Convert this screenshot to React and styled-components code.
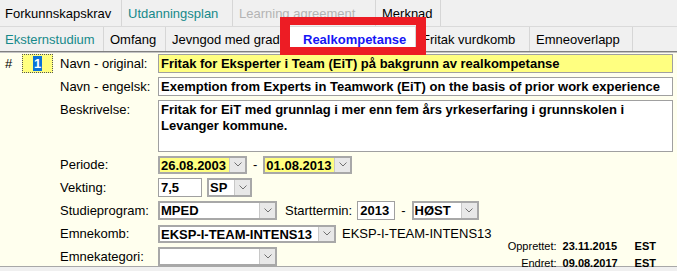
import React from 'react';
import styled, { createGlobalStyle } from 'styled-components';

const GlobalStyle = createGlobalStyle`
  body {
    margin: 0;
    background: #f0f0f0;
    font-family: "Liberation Sans", Arial, sans-serif;
    font-size: 13px;
    color: #000;
  }
`

const Page = styled.div`
  width: 677px;
  height: 271px;
  overflow: hidden;
  background: #f0f0f0;
`

const TabsArea = styled.div`
  position: relative;
  border-bottom: 1px solid #808080;
  box-shadow: 0 1px 0 #c4c4c4;
`

const TabRow = styled.div`
  display: flex;
  height: ${p => p.$h}px;
  border-bottom: ${p => (p.$last ? 'none' : '1px solid #dadada')};
  box-sizing: border-box;
`

const Tab = styled.div`
  width: ${p => p.$w}px;
  box-sizing: border-box;
  display: flex;
  align-items: center;
  padding-left: ${p => (p.$active ? 13 : 6)}px;
  border-right: 1px solid #d6d6d6;
  background: ${p => (p.$active ? '#ffffff' : '#f0f0f0')};
  color: ${p => p.$color || '#000'};
  font-weight: ${p => (p.$active ? 'bold' : 'normal')};
  white-space: nowrap;
  &:first-child {
    padding-left: 5px;
  }
`

const Highlight = styled.div`
  position: absolute;
  left: 280px;
  top: 17px;
  width: 146px;
  height: 38px;
  box-sizing: border-box;
  border-style: solid;
  border-color: #ed1c24;
  border-width: 8px 10px;
  pointer-events: none;
`

const Content = styled.div`
  height: 215px;
  box-sizing: border-box;
  background: #ffffee;
  border-bottom: 1px solid #a8a8a8;
  padding: 2px 4px 0 5px;
  display: flex;
  flex-direction: column;
  gap: 4px;
`

const Row = styled.div`
  display: grid;
  grid-template-columns: 17px 38px 98px 1fr;
  align-items: ${p => (p.$top ? 'start' : 'center')};
  min-height: 19px;
`

const Hash = styled.span``

const NumBox = styled.div`
  width: 31px;
  height: 19px;
  box-sizing: border-box;
  border: 1px dotted #555;
  background: #ffff80;
  display: flex;
  align-items: center;
  justify-content: center;
  font-weight: bold;
  span {
    background: #0a72d8;
    color: #fff;
    padding: 0 1px;
    line-height: 15px;
  }
`

const Label = styled.span`
  grid-column: 3;
  white-space: nowrap;
  padding-top: ${p => (p.$top ? 2 : 0)}px;
`

const Field = styled.div`
  grid-column: 4;
  display: flex;
  align-items: center;
  gap: 5px;
  white-space: nowrap;
`

const TextBox = styled.div`
  width: ${p => (p.$w ? `${p.$w}px` : '100%')};
  height: 19px;
  box-sizing: border-box;
  border: 1px solid #a0a0a0;
  background: ${p => (p.$yellow ? '#ffff80' : '#fff')};
  font-weight: bold;
  padding-left: 2px;
  line-height: 17px;
  overflow: hidden;
`

const TextArea = styled.div`
  height: 52px;
  box-sizing: border-box;
  border: 1px solid #a0a0a0;
  background: #fff;
  font-weight: bold;
  padding: 1px 2px;
  line-height: 16px;
`

const SelectBox = styled.div`
  width: ${p => p.$w}px;
  height: ${p => p.$h || 19}px;
  box-sizing: border-box;
  border: 2px solid #a8a8a8;
  background: ${p => (p.$yellow ? '#ffff80' : '#fff')};
  display: flex;
  align-items: stretch;
`

const SelectValue = styled.span`
  flex: 1;
  font-weight: bold;
  padding-left: 1px;
  line-height: 15px;
  overflow: hidden;
`

const SelectButton = styled.span`
  width: 15px;
  background: #e8e8e8;
  border-left: 1px solid #c8c8c8;
  display: flex;
  align-items: center;
  justify-content: center;
`

const Dash = styled.span`
  margin: 0 1px;
`

const Bottom = styled.div`
  display: flex;
  justify-content: space-between;
`

const BottomRows = styled.div`
  display: flex;
  flex-direction: column;
  gap: 4px;
`

const Audit = styled.div`
  align-self: flex-end;
  margin-right: 17px;
  margin-bottom: -6px;
  display: grid;
  grid-template-columns: auto 66px auto;
  column-gap: 6px;
  font-size: 11px;
  line-height: 17px;
`

const AuditLabel = styled.span`
  text-align: right;
`

const AuditValue = styled.span`
  font-weight: bold;
`

function Chevron() {
  return (
    <svg width="8" height="5" viewBox="0 0 8 5">
      <path d="M0.5 0.5 L4 4 L7.5 0.5" fill="none" stroke="#707070" strokeWidth="1" />
    </svg>
  )
}

function Select({ w, h, yellow, value }) {
  return (
    <SelectBox $w={w} $h={h} $yellow={yellow}>
      <SelectValue>{value}</SelectValue>
      <SelectButton>
        <Chevron />
      </SelectButton>
    </SelectBox>
  )
}

const topTabs = [
  { label: 'Forkunnskapskrav', w: 122 },
  { label: 'Utdanningsplan', w: 111, color: '#16898a' },
  { label: 'Learning agreement', w: 143, color: '#b4b4b4' },
  { label: 'Merknad', w: 65 },
]

const subTabs = [
  { label: 'Eksternstudium', w: 104, color: '#16898a' },
  { label: 'Omfang', w: 62 },
  { label: 'Jevngod med grad', w: 124 },
  { label: 'Realkompetanse', w: 126, active: true, color: '#1515f5' },
  { label: 'Fritak vurdkomb', w: 114 },
  { label: 'Emneoverlapp', w: 103 },
]

export default function App() {
  return (
    <Page>
      <GlobalStyle />
      <TabsArea>
        <TabRow $h={27}>
          {topTabs.map(t => (
            <Tab key={t.label} $w={t.w} $color={t.color}>{t.label}</Tab>
          ))}
        </TabRow>
        <TabRow $h={24} $last>
          {subTabs.map(t => (
            <Tab key={t.label} $w={t.w} $color={t.color} $active={t.active}>{t.label}</Tab>
          ))}
        </TabRow>
        <Highlight />
      </TabsArea>

      <Content>
        <Row>
          <Hash>#</Hash>
          <NumBox><span>1</span></NumBox>
          <Label>Navn - original:</Label>
          <Field><TextBox $yellow>Fritak for Eksperter i Team (EiT) på bakgrunn av realkompetanse</TextBox></Field>
        </Row>
        <Row>
          <Label>Navn - engelsk:</Label>
          <Field><TextBox>Exemption from Experts in Teamwork (EiT) on the basis of prior work experience</TextBox></Field>
        </Row>
        <Row $top>
          <Label $top>Beskrivelse:</Label>
          <Field style={{ display: 'block', whiteSpace: 'normal' }}>
            <TextArea>Fritak for EiT med grunnlag i mer enn fem års yrkeserfaring i grunnskolen i Levanger kommune.</TextArea>
          </Field>
        </Row>
        <Row>
          <Label>Periode:</Label>
          <Field>
            <Select w={89} h={18} yellow value="26.08.2003" />
            <Dash>-</Dash>
            <Select w={89} h={18} yellow value="01.08.2013" />
          </Field>
        </Row>
        <Row>
          <Label>Vekting:</Label>
          <Field>
            <TextBox $w={44}>7,5</TextBox>
            <Select w={45} value="SP" />
          </Field>
        </Row>
        <Row>
          <Label>Studieprogram:</Label>
          <Field>
            <Select w={119} value="MPED" />
            <span style={{ marginLeft: 3 }}>Starttermin:</span>
            <TextBox $w={38}>2013</TextBox>
            <Dash>-</Dash>
            <Select w={67} value="HØST" />
          </Field>
        </Row>
        <Bottom>
          <BottomRows>
            <Row>
              <Label>Emnekomb:</Label>
              <Field>
                <Select w={178} h={18} value="EKSP-I-TEAM-INTENS13" />
                <span style={{ marginLeft: 1 }}>EKSP-I-TEAM-INTENS13</span>
              </Field>
            </Row>
            <Row>
              <Label>Emnekategori:</Label>
              <Field>
                <Select w={119} value="" />
              </Field>
            </Row>
          </BottomRows>
          <Audit>
            <AuditLabel>Opprettet:</AuditLabel>
            <AuditValue>23.11.2015</AuditValue>
            <AuditValue>EST</AuditValue>
            <AuditLabel>Endret:</AuditLabel>
            <AuditValue>09.08.2017</AuditValue>
            <AuditValue>EST</AuditValue>
          </Audit>
        </Bottom>
      </Content>
    </Page>
  )
}
